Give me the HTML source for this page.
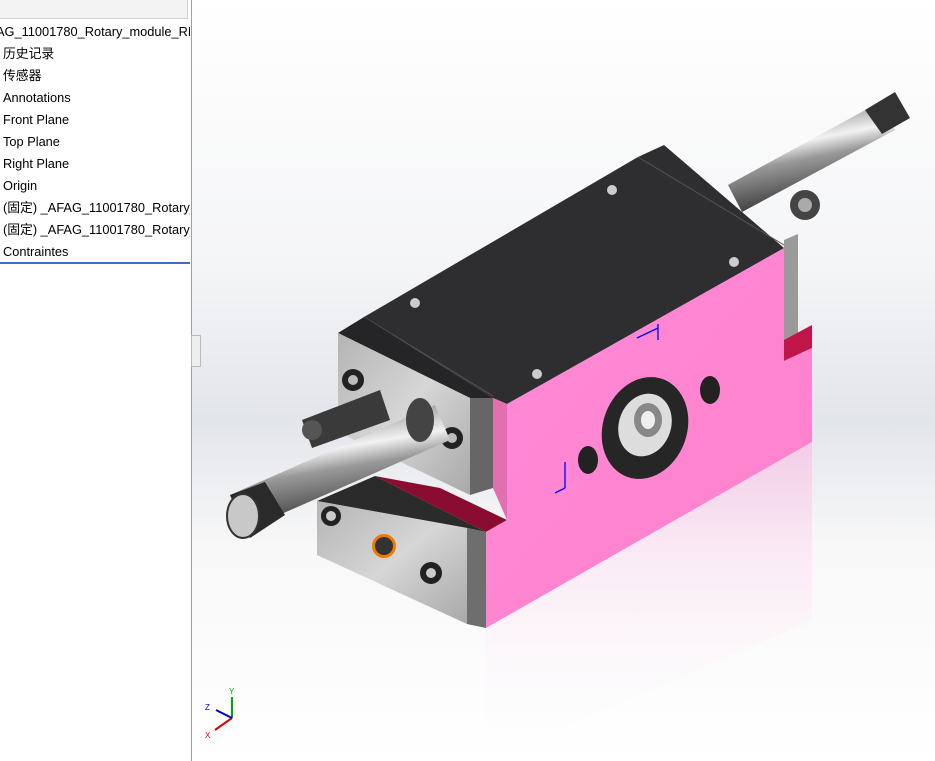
<!DOCTYPE html>
<html><head><meta charset="utf-8"><style>
html,body{margin:0;padding:0;width:935px;height:761px;overflow:hidden;background:#fff;font-family:"Liberation Sans","Noto Sans CJK SC",sans-serif}
#panel{position:absolute;left:0;top:0;width:191px;height:761px;background:#fff;border-right:1px solid #a0a0a0;overflow:hidden}
#hdr{position:absolute;left:0;top:0;width:187px;height:18px;background:#f3f3f3;border-bottom:1px solid #d0d0d0;border-right:1px solid #d0d0d0}
.it{position:absolute;left:3px;font-size:12.8px;line-height:16px;height:16px;color:#000;white-space:nowrap;overflow:hidden;width:187px}
#sel{position:absolute;left:0;top:262px;width:190px;height:2px;background:#3a6fc1}
#view{position:absolute;left:192px;top:0;width:743px;height:761px;background:linear-gradient(#ffffff 0%,#f4f5f7 35%,#e2e5ea 55%,#f8f8f9 72%,#ffffff 100%)}
#grip{position:absolute;left:191px;top:335px;width:8px;height:30px;background:#eee;border:1px solid #bbb}
</style></head><body>
<div id="view"></div>
<div id="panel">
<div id="hdr"></div>
<div class="it" style="top:24px;left:-4px;width:194px">AG_11001780_Rotary_module_RM_</div>
<div class="it" style="top:46px">历史记录</div>
<div class="it" style="top:68px">传感器</div>
<div class="it" style="top:90px">Annotations</div>
<div class="it" style="top:112px">Front Plane</div>
<div class="it" style="top:134px">Top Plane</div>
<div class="it" style="top:156px">Right Plane</div>
<div class="it" style="top:178px">Origin</div>
<div class="it" style="top:200px">(固定) _AFAG_11001780_Rotary_n</div>
<div class="it" style="top:222px">(固定) _AFAG_11001780_Rotary_n</div>
<div class="it" style="top:244px">Contraintes</div>
<div id="sel"></div>
</div>
<div id="grip"></div>
<svg style="position:absolute;left:0;top:0" width="935" height="761">
<defs>
<linearGradient id="rod" x1="0" y1="0" x2="0.3" y2="1"><stop offset="0" stop-color="#444"/><stop offset="0.45" stop-color="#f2f2f2"/><stop offset="0.6" stop-color="#999"/><stop offset="1" stop-color="#333"/></linearGradient>
<linearGradient id="pk" x1="0" y1="0" x2="1" y2="1"><stop offset="0" stop-color="#ff8ad6"/><stop offset="1" stop-color="#ff80cc"/></linearGradient>
<linearGradient id="gr" x1="0" y1="0" x2="1" y2="1"><stop offset="0" stop-color="#b4b4b4"/><stop offset="0.5" stop-color="#d6d6d6"/><stop offset="1" stop-color="#a8a8a8"/></linearGradient>
<linearGradient id="rf" x1="0" y1="0" x2="0" y2="1"><stop offset="0" stop-color="#ffb0e0" stop-opacity="0.5"/><stop offset="1" stop-color="#fff" stop-opacity="0"/></linearGradient>
</defs>
<polygon points="486,628 812,442 812,620 486,761" fill="url(#rf)"/>
<!-- back rod -->
<polygon points="728,185 880,102 895,130 742,212" fill="url(#rod)"/>
<polygon points="865,110 895,92 910,118 882,134" fill="#333"/>
<polygon points="784,240 798,234 798,345 784,352" fill="#9a9a9a"/>
<circle cx="805" cy="205" r="15" fill="#444"/><circle cx="805" cy="205" r="7" fill="#aaa"/>
<polygon points="375,476 486,532 507,520 440,488" fill="#8a0c30"/>
<polygon points="784,340 812,325 812,348 784,361" fill="#c01548"/>
<polygon points="317,501 375,476 486,532 467,528" fill="#2b2b2b"/>
<polygon points="317,501 467,528 467,624 317,555" fill="url(#gr)"/>
<polygon points="467,528 486,532 486,628 467,624" fill="#6e6e6e"/>
<circle cx="331" cy="516" r="10" fill="#222"/><circle cx="331" cy="516" r="5" fill="#ccc"/>
<circle cx="431" cy="573" r="11" fill="#222"/><circle cx="431" cy="573" r="5" fill="#ccc"/>
<circle cx="384" cy="546" r="12" fill="#f07a00"/><circle cx="384" cy="546" r="9" fill="#333"/>
<polygon points="507,404 784,248 784,361 812,348 812,442 486,628 486,532 507,520" fill="url(#pk)"/>
<polygon points="364,317 638,157 664,145 784,248 507,404 493,398" fill="#2e2e30"/>
<line x1="364" y1="317" x2="493" y2="396" stroke="#555"/>
<line x1="638" y1="157" x2="784" y2="245" stroke="#555"/>
<polygon points="338,333 364,317 493,398 470,398" fill="#252527"/>
<polygon points="338,333 470,398 470,495 338,432" fill="url(#gr)"/>
<polygon points="470,398 493,398 493,488 470,495" fill="#666"/>
<polygon points="493,398 507,404 507,520 493,488" fill="#e070b0"/>
<circle cx="353" cy="380" r="11" fill="#222"/><circle cx="353" cy="380" r="5" fill="#bbb"/>
<circle cx="452" cy="438" r="11" fill="#222"/><circle cx="452" cy="438" r="5" fill="#bbb"/>
<circle cx="415" cy="303" r="5" fill="#ccc"/><circle cx="612" cy="190" r="5" fill="#ccc"/>
<circle cx="734" cy="262" r="5" fill="#ccc"/><circle cx="537" cy="374" r="5" fill="#ccc"/>
<ellipse cx="645" cy="428" rx="42" ry="52" fill="#262626" transform="rotate(20 645 428)"/>
<ellipse cx="645" cy="425" rx="26" ry="32" fill="#ddd" transform="rotate(20 645 425)"/>
<ellipse cx="648" cy="420" rx="14" ry="17" fill="#888"/>
<ellipse cx="648" cy="420" rx="7" ry="9" fill="#eee"/>
<ellipse cx="710" cy="390" rx="10" ry="14" fill="#222"/>
<ellipse cx="588" cy="460" rx="10" ry="14" fill="#222"/>
<polygon points="230,495 435,405 450,440 245,530" fill="url(#rod)"/>
<polygon points="302,420 380,390 390,420 312,448" fill="#3a3a3a"/>
<ellipse cx="312" cy="430" rx="10" ry="10" fill="#555"/>
<ellipse cx="420" cy="420" rx="14" ry="22" fill="#444"/>
<polygon points="230,495 265,482 285,515 250,538" fill="#2a2a2a"/>
<ellipse cx="243" cy="516" rx="16" ry="22" fill="#c8c8c8" stroke="#333" stroke-width="2"/>
<g stroke="#0000ff" stroke-width="1.3" fill="none">
<line x1="565" y1="462" x2="565" y2="488"/><line x1="565" y1="488" x2="555" y2="493"/>
<line x1="658" y1="324" x2="658" y2="340"/><line x1="658" y1="328" x2="637" y2="338"/>
</g>
<g stroke-width="2" fill="none">
<line x1="232" y1="718" x2="232" y2="697" stroke="#0a0"/>
<line x1="232" y1="718" x2="215" y2="730" stroke="#d00"/>
<line x1="232" y1="718" x2="216" y2="710" stroke="#00c"/>
</g>
<text x="229" y="694" font-size="8" fill="#0a0" font-family="Liberation Sans">Y</text>
<text x="205" y="738" font-size="8" fill="#d00" font-family="Liberation Sans">X</text>
<text x="205" y="710" font-size="8" fill="#00c" font-family="Liberation Sans">Z</text>
</svg>
</body></html>
